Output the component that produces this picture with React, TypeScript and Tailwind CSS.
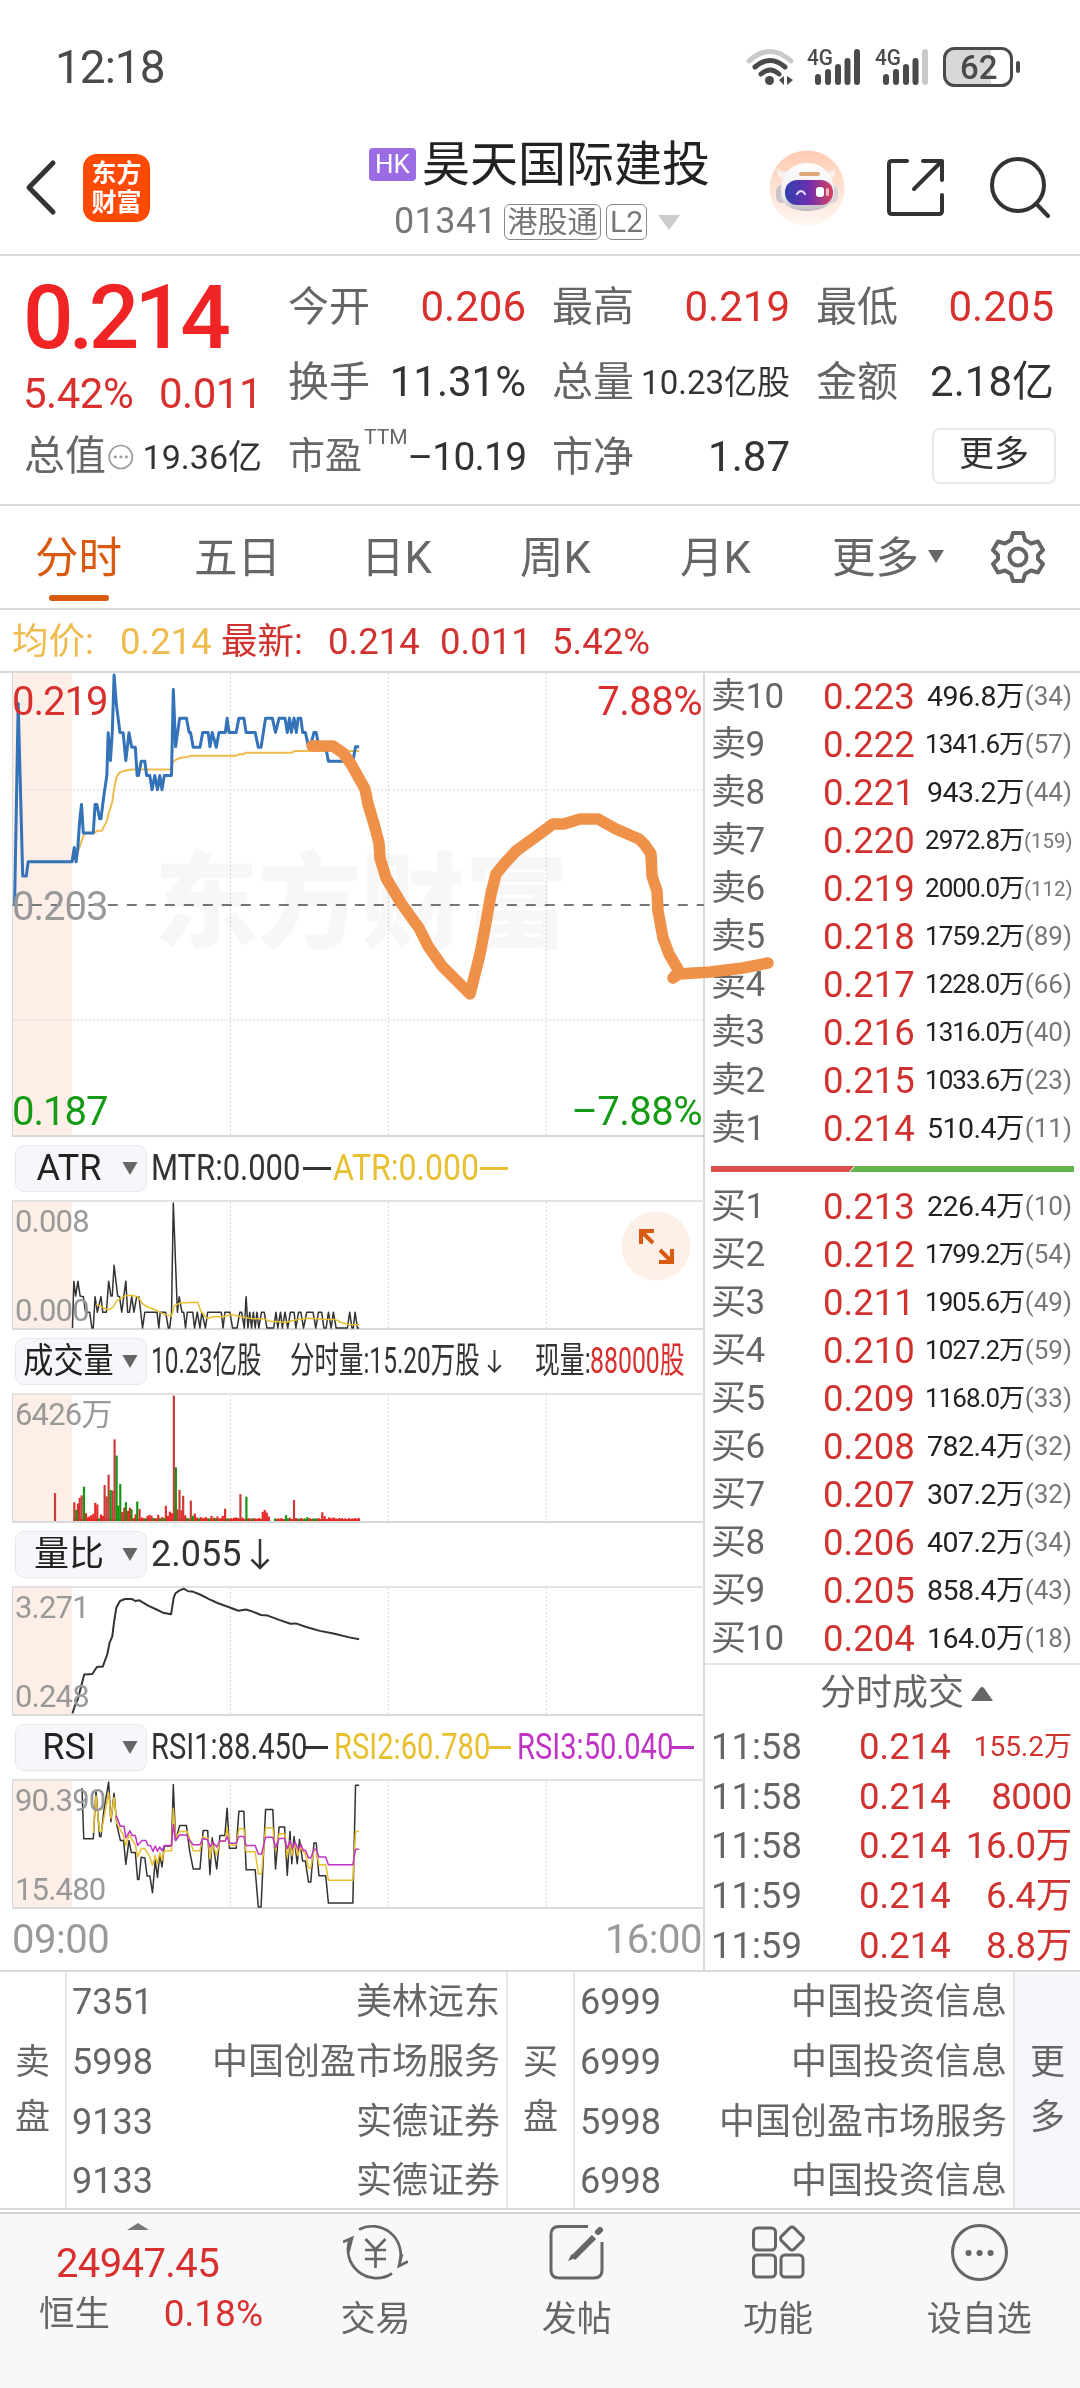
import type { ReactNode } from 'react';
import clsx from 'clsx';

const PRE_MARKET = 59;

const SELLS = [
  ['卖10', '0.223', '496.8万', '34'],
  ['卖9', '0.222', '1341.6万', '57'],
  ['卖8', '0.221', '943.2万', '44'],
  ['卖7', '0.220', '2972.8万', '159'],
  ['卖6', '0.219', '2000.0万', '112'],
  ['卖5', '0.218', '1759.2万', '89'],
  ['卖4', '0.217', '1228.0万', '66'],
  ['卖3', '0.216', '1316.0万', '40'],
  ['卖2', '0.215', '1033.6万', '23'],
  ['卖1', '0.214', '510.4万', '11'],
];

const BUYS = [
  ['买1', '0.213', '226.4万', '10'],
  ['买2', '0.212', '1799.2万', '54'],
  ['买3', '0.211', '1905.6万', '49'],
  ['买4', '0.210', '1027.2万', '59'],
  ['买5', '0.209', '1168.0万', '33'],
  ['买6', '0.208', '782.4万', '32'],
  ['买7', '0.207', '307.2万', '32'],
  ['买8', '0.206', '407.2万', '34'],
  ['买9', '0.205', '858.4万', '43'],
  ['买10', '0.204', '164.0万', '18'],
];

const TRADES = [
  ['11:58', '0.214', '155.2万'],
  ['11:58', '0.214', '8000'],
  ['11:58', '0.214', '16.0万'],
  ['11:59', '0.214', '6.4万'],
  ['11:59', '0.214', '8.8万'],
];

const SELL_BROKERS = [
  ['7351', '美林远东'],
  ['5998', '中国创盈市场服务'],
  ['9133', '实德证券'],
  ['9133', '实德证券'],
];

const BUY_BROKERS = [
  ['6999', '中国投资信息'],
  ['6999', '中国投资信息'],
  ['5998', '中国创盈市场服务'],
  ['6998', '中国投资信息'],
];

const PRICE_LINE =
  '30,738 38,128 48,648 56,648 60,605 157,605 162,562 166,605 170,560 174,480 178,432 182,518 204,518 208,432 212,432 218,475 221,475 228,400 234,345 237,216 242,300 246,216 250,42 255,130 263,215 270,216 276,300 283,216 289,260 297,260 301,345 304,345 310,302 318,302 322,345 329,345 334,388 340,345 346,388 351,345 356,388 361,345 377,345 381,86 386,258 395,172 410,172 416,215 419,215 425,260 440,260 446,215 458,215 462,258 467,215 476,260 482,215 496,215 500,172 504,215 520,215 526,172 537,172 542,215 562,215 569,260 575,260 585,172 600,172 607,215 615,172 628,172 633,215 638,172 642,215 648,172 653,215 657,172 663,172 667,215 673,215 680,258 684,258 692,215 697,215 703,260 718,260 724,302 778,302 784,258 792,258';

const AVG_LINE =
  '60,605 157,605 170,575 184,519 204,519 214,511 223,511 233,485 240,450 246,425 250,385 255,350 262,336 272,331 288,327 375,327 381,302 390,295 403,290 413,289 420,285 520,285 526,281 535,281 542,276 643,276 650,271 792,271';

const MTR_LINE =
  '158,597 161,452 165,498 170,452 175,498 182,500 187,548 196,548 201,597 204,597 208,500 213,548 221,500 225,548 233,548 238,452 243,498 246,498 250,403 258,498 262,500 267,548 276,452 280,548 284,548 289,500 294,548 300,500 305,500 313,597 318,548 345,548 349,597 352,548 364,548 370,597 373,597 377,550 381,210 390,548 394,500 400,548 404,548 408,597 412,548 424,548 428,597 434,548 440,597 444,548 452,597 457,548 487,548 491,597 495,548 506,548 512,597 522,597 528,548 532,548 538,597 542,500 546,597 550,548 554,597 558,548 562,597 566,548 570,597 576,548 582,548 588,597 603,597 608,548 612,597 618,548 622,597 628,548 634,597 640,548 648,548 652,597 658,548 663,548 669,597 676,548 690,548 696,597 702,548 709,548 714,597 719,597 724,548 730,597 735,548 741,597 766,597 771,548 776,597 779,597 783,548 788,597 792,597';

const ATR_LINE =
  '210,523 222,530 231,538 240,540 248,532 256,512 264,505 275,497 290,496 303,500 313,522 325,532 345,543 361,555 377,560 383,528 395,520 435,517 442,545 450,558 456,567 470,562 490,562 510,555 530,562 555,568 578,568 595,576 610,577 628,580 650,572 680,567 710,570 740,571 752,580 770,586 792,587';

const RATIO_LINE =
  '158,522 163,500 170,478 177,440 184,402 202,401 212,379 225,378 235,340 240,305 246,285 250,240 255,197 263,176 274,170 290,170 297,176 306,174 325,190 345,203 358,212 376,217 382,165 386,152 393,145 404,138 414,146 424,147 440,156 460,170 480,183 500,193 525,206 542,202 555,208 575,219 590,221 615,234 640,246 652,245 675,256 705,268 735,276 770,288 792,294';

const RSI1_LINE =
  '179,736 183,893 204,893 210,745 218,886 221,886 228,800 238,717 243,840 250,752 256,850 264,898 271,898 276,972 283,898 288,935 297,935 302,1019 305,1019 310,950 318,952 323,1008 329,1008 335,1060 341,960 346,1012 351,940 356,980 361,915 377,915 381,725 386,898 395,852 410,852 417,930 425,986 440,986 447,867 457,867 462,1004 467,890 477,986 484,883 495,883 500,798 505,922 520,922 526,808 537,808 542,989 562,989 569,1104 575,1104 585,802 601,802 607,986 615,856 627,856 633,1006 639,870 643,970 648,886 655,970 660,895 667,962 673,962 680,1027 685,1027 692,906 697,906 703,1007 718,1007 724,1092 778,1092 784,727 792,727';

const RSI2_LINE =
  '204,875 210,760 218,870 222,870 238,750 243,830 250,765 256,845 270,880 276,913 283,880 297,912 302,949 310,923 318,923 329,949 335,975 341,945 346,970 351,935 356,960 361,930 377,930 381,798 386,890 395,870 412,870 425,930 440,930 446,887 458,892 462,955 467,910 477,943 484,900 496,900 500,858 505,912 520,912 526,862 537,862 542,933 562,933 569,1001 576,1001 585,859 601,859 607,930 615,877 628,878 633,950 639,900 643,945 650,905 656,945 662,920 673,940 680,983 685,983 692,926 697,926 703,973 718,973 724,1021 778,1021 784,870 792,870';

const RSI3_LINE =
  '255,822 264,854 272,854 276,890 285,868 290,883 297,883 302,913 312,898 320,898 325,913 331,915 336,932 341,915 346,932 351,918 356,930 361,914 377,914 381,848 386,898 395,881 410,881 416,896 425,911 440,911 446,893 457,896 462,918 468,903 477,918 484,900 496,900 500,886 505,907 520,907 526,886 537,886 542,914 562,914 569,940 576,940 585,888 601,888 607,920 615,892 627,892 633,923 639,900 645,922 650,903 657,925 663,910 668,928 673,928 680,952 685,952 692,925 697,925 703,949 718,949 724,973 778,973 784,925 792,925';

// x : bar top, baseline at 606
const RED_BARS: [number, number][] = [
  [162, 520], [220, 548], [231, 552], [236, 534], [242, 527], [255, 582], [260, 595], [265, 592], [271, 588], [277, 584],
  [283, 550], [289, 555], [300, 586], [306, 590], [311, 495], [317, 530], [323, 463], [335, 512], [341, 354], [364, 578],
  [370, 565], [381, 575], [387, 565], [399, 597], [404, 585], [416, 569], [422, 595], [428, 597], [440, 590], [446, 587],
  [452, 590], [464, 597], [472, 587], [484, 594], [495, 559], [501, 590], [507, 577], [513, 582], [519, 219], [530, 570],
  [536, 510], [542, 573], [547, 528], [553, 588], [570, 543], [582, 583], [588, 595], [600, 594], [608, 596], [616, 594],
  [632, 590], [640, 596], [650, 592], [660, 597], [666, 590], [673, 568], [690, 597], [700, 596], [706, 595], [712, 597],
  [719, 523], [725, 595], [744, 597], [762, 598], [775, 597], [786, 578], [792, 572], [798, 580], [804, 592], [832, 598],
  [842, 597], [868, 596], [880, 541], [886, 597], [902, 597], [928, 597], [954, 597], [965, 579], [972, 591], [985, 595],
  [992, 597], [999, 595], [1006, 598], [1016, 597], [1024, 597], [1034, 598], [1046, 597], [1056, 598], [1064, 597], [1074, 596],
];

const GREEN_BARS: [number, number][] = [
  [226, 572], [249, 500], [294, 598], [329, 510], [347, 404], [352, 558], [358, 492], [375, 548], [392, 570], [409, 546],
  [434, 598], [458, 597], [478, 598], [490, 597], [525, 440], [560, 596], [576, 590], [594, 598], [624, 598], [645, 598],
  [680, 598], [737, 531], [755, 598], [823, 598], [856, 588], [862, 598], [894, 598], [912, 598], [920, 594], [938, 598],
  [946, 598],
];

const HAND_DRAWN =
  'M312 73 L333 73 L343 80 L351 91 L365 116 L368 131 L374 151 L379 170 L380 185 L386 205 L401 230 L419 255 L428 273 L442 293 L470 321 L475 301 L480 281 L485 255 L491 221 L496 201 L505 190 L516 178 L534 165 L553 151 L564 151 L580 146 L598 146 L616 156 L639 166 L645 172 L651 181 L652 203 L657 218 L658 238 L663 265 L669 281 L679 298 L673 305 L679 301 L710 299 L743 295 L768 290';

function Squeeze({ width, className, children }: { width: string; className: string; children: ReactNode }) {
  return (
    <span className={clsx('block shrink-0', width)}>
      <span className={clsx('inline-block origin-left whitespace-nowrap', className)}>{children}</span>
    </span>
  );
}

function StatusBar() {
  return (
    <div className="flex h-[136px] items-center justify-between pr-[58px] pl-[55px]">
      <span className="text-[46px] tracking-[-1px] text-[#4a4a4a]">12:18</span>
      <svg width="278" height="44" viewBox="744 46 278 44" fill="none" fontFamily="Roboto, sans-serif">
        <path d="M749 61 Q770 42 791 61" stroke="#c9c9c9" strokeWidth="5" strokeLinecap="round" />
        <path d="M755 67 Q770 54 785 67" stroke="#4a4a4a" strokeWidth="5" strokeLinecap="round" />
        <path d="M761 74 Q770 66 779 74" stroke="#4a4a4a" strokeWidth="5" strokeLinecap="round" />
        <circle cx="769.500" cy="80.500" r="4.500" fill="#4a4a4a" />
        <path d="M779 80 L784 76 V85 Z M787 76 L793 80 L787 85 Z" fill="#4a4a4a" />
        <text x="807" y="65" fontSize="22" fontWeight="500" textLength="26" lengthAdjust="spacingAndGlyphs" fill="#4a4a4a">
          4G
        </text>
        <g stroke="#4a4a4a" strokeWidth="6" strokeLinecap="round">
          <path d="M818 77 V82 M828 72 V82 M838 67 V82 M847.500 61 V82 M857 52 V82" />
          <path d="M886 77 V82 M896 72 V82 M906 67 V82 M915.500 61 V82" />
          <path d="M925 52 V82" stroke="#c9c9c9" />
        </g>
        <text x="875" y="65" fontSize="22" fontWeight="500" textLength="26" lengthAdjust="spacingAndGlyphs" fill="#4a4a4a">
          4G
        </text>
        <path d="M945 58 Q945 49 954 49 H991 V84 H954 Q945 84 945 75 Z" fill="#d8d8d8" />
        <rect x="944.500" y="48.500" width="67" height="37" rx="10" stroke="#4a4a4a" strokeWidth="3" />
        <path d="M1018 63 V71" stroke="#4a4a4a" strokeWidth="4" strokeLinecap="round" />
        <text x="960" y="78.500" fontSize="33" fontWeight="500" fill="#4a4a4a">
          62
        </text>
      </svg>
    </div>
  );
}

function Robot() {
  return (
    <svg width="76" height="76" viewBox="0 0 76 76">
      <defs>
        <linearGradient id="halo" x1="0" y1="0" x2="0" y2="1">
          <stop offset="0" stopColor="#ffcbb2" />
          <stop offset="1" stopColor="#fff7f3" />
        </linearGradient>
        <linearGradient id="visor" x1="0" y1="0" x2="1" y2="0">
          <stop offset="0" stopColor="#2f3fae" />
          <stop offset="0.5" stopColor="#6f2fb0" />
          <stop offset="1" stopColor="#d8435e" />
        </linearGradient>
        <linearGradient id="shell" x1="0" y1="0" x2="0" y2="1">
          <stop offset="0" stopColor="#ffffff" />
          <stop offset="0.7" stopColor="#eeebee" />
          <stop offset="1" stopColor="#bdb9c0" />
        </linearGradient>
      </defs>
      <circle cx="38" cy="38" r="37.500" fill="url(#halo)" />
      <path d="M8 18 Q7 28 16 30 L22 20 Q12 24 8 18 Z M66 18 Q68 28 59 30 L52 20 Q63 24 66 18 Z" fill="#f7efed" />
      <rect x="7" y="35" width="12" height="18" rx="6" fill="#c9c5ca" />
      <rect x="57" y="35" width="12" height="18" rx="6" fill="#d8d3d6" />
      <path d="M38 13 C54 13 65 25 65 42 C65 55 53 61 38 61 C23 61 12 55 12 42 C12 25 22 13 38 13 Z" fill="url(#shell)" />
      <rect x="30" y="22" width="21" height="4" rx="2" fill="#dfa878" />
      <rect x="16" y="30" width="48" height="25" rx="12" fill="url(#visor)" />
      <path d="M28 44 Q32 38 36 44" fill="none" stroke="#e4dcff" strokeWidth="2.200" strokeLinecap="round" />
      <rect x="47" y="37" width="8" height="10" rx="3" fill="#fff" />
      <rect x="57" y="38" width="3" height="8" rx="1.500" fill="#f3b6c1" />
    </svg>
  );
}

function Header() {
  return (
    <header className="flex h-[120px] items-center border-b-2 border-[#d9d9d9] pb-[14px]">
      <svg className="ml-[24px]" width="34" height="58" viewBox="0 0 34 58" fill="none">
        <path d="M29 4 L5 28.500 L29 53" stroke="#333" strokeWidth="5" strokeLinecap="round" strokeLinejoin="round" />
      </svg>
      <div className="ml-[25px] grid h-[68px] w-[67px] place-content-center rounded-[14px] bg-[#ff4a05] text-center text-[25px] leading-[29px] font-bold text-white">
        <div>东方</div>
        <div>财富</div>
      </div>
      <div className="mt-[5px] ml-[219px] w-[342px]">
        <div className="flex h-[63px] items-center">
          <span className="mr-[6px] h-[33px] w-[47px] rounded-[4px] bg-[#9b6ce3] text-center text-[26px] leading-[33px] text-white">
            HK
          </span>
          <span className="text-[48px] leading-[60px] whitespace-nowrap text-[#222]">昊天国际建投</span>
        </div>
        <div className="flex h-[52px] items-center pl-[25px] text-[#777]">
          <span className="w-[110px] text-[36px] tracking-[0.400px]">01341</span>
          <span className="h-[36px] w-[97px] rounded-[6px] border-[1.500px] border-[#888] text-center text-[30px] leading-[33px]">港股通</span>
          <span className="ml-[5px] h-[36px] w-[41px] rounded-[6px] border-[1.500px] border-[#888] text-center text-[30px] leading-[33px]">L2</span>
          <svg className="ml-[11px]" width="22" height="15" viewBox="0 0 22 15">
            <path d="M0 0 H22 L11 15 Z" fill="#ccc" />
          </svg>
        </div>
      </div>
      <div className="ml-[58px] flex items-center">
        <Robot />
        <svg className="ml-[40px]" width="62" height="62" viewBox="0 0 62 62" fill="none" stroke="#333" strokeWidth="4" strokeLinecap="round" strokeLinejoin="round">
          <path d="M22 4 H7 Q4 4 4 7 V54 Q4 57 7 57 H54 Q57 57 57 54 V38" />
          <path d="M38 4 H57 V23 M57 4 L29 32" />
        </svg>
        <svg className="ml-[41px]" width="64" height="64" viewBox="0 0 64 64" fill="none" stroke="#333" strokeWidth="4" strokeLinecap="round">
          <circle cx="30" cy="29" r="26" />
          <path d="M48 47.500 L60 60" />
        </svg>
      </div>
    </header>
  );
}

function Stat({ label, value, valueClass }: { label: ReactNode; value: string; valueClass: string }) {
  return (
    <div className="flex h-[75px] items-center justify-between whitespace-nowrap">
      <span className="-ml-[2px] text-[41px] text-[#666]">{label}</span>
      <span className={valueClass}>{value}</span>
    </div>
  );
}

function Quote() {
  return (
    <section className="grid h-[250px] grid-cols-4 gap-x-[28px] border-b-2 border-[#d9d9d9] px-[26px]">
      <div className="pt-[24px] whitespace-nowrap">
        <div className="-ml-[3px] h-[76px] text-[89px] leading-[76px] font-medium tracking-[-4.800px] text-[#f02424]">0.214</div>
        <div className="-ml-[3px] flex h-[77px] items-center justify-between text-[42px] tracking-[-0.500px] text-[#d8302e]">
          <span>5.42%</span>
          <span>0.011</span>
        </div>
        <div className="-ml-[2px] flex h-[48px] items-center">
          <span className="text-[41px] text-[#666]">总值</span>
          <svg className="ml-[2px]" width="30" height="30" viewBox="0 0 30 30" fill="none" stroke="#999">
            <circle cx="15" cy="15" r="13.500" strokeWidth="2" />
            <path d="M8.500 15 H8.600 M15 15 H15.100 M21.500 15 H21.600" strokeWidth="3.500" strokeLinecap="round" />
          </svg>
          <span className="ml-[9px] text-[34px] text-[#333]">19.36亿</span>
        </div>
      </div>
      <div className="pt-[14px]">
        <Stat label="今开" value="0.206" valueClass="text-[42px] text-[#d8302e]" />
        <Stat label="换手" value="11.31%" valueClass="text-[42px] text-[#333]" />
        <Stat
          label={
            <span className="flex text-[37px]">
              市盈<span className="-mt-[12px] ml-[2px] text-[21px] leading-[28px]">TTM</span>
            </span>
          }
          value="–10.19"
          valueClass="text-[39px] tracking-[-0.800px] text-[#333]"
        />
      </div>
      <div className="pt-[14px]">
        <Stat label="最高" value="0.219" valueClass="text-[42px] text-[#d8302e]" />
        <Stat label="总量" value="10.23亿股" valueClass="text-[33px] text-[#333]" />
        <Stat label="市净" value="1.87" valueClass="text-[42px] text-[#333]" />
      </div>
      <div className="pt-[14px]">
        <Stat label="最低" value="0.205" valueClass="text-[42px] text-[#d8302e]" />
        <Stat label="金额" value="2.18亿" valueClass="text-[42px] text-[#333]" />
        <div className="flex h-[75px] items-center justify-end">
          <span className="-mt-[3px] -mr-[2px] h-[56px] w-[124px] rounded-[8px] border-2 border-[#e8e8e8] text-center text-[35px] leading-[50px] text-[#333]">
            更多
          </span>
        </div>
      </div>
    </section>
  );
}

function Tabs() {
  return (
    <nav className="flex h-[104px] border-b-2 border-[#d9d9d9] text-[43.500px] leading-[106px] whitespace-nowrap text-[#666]">
      <div className="ml-[35px] w-[159px] text-[#d9590f]">
        <div className="h-[89px]">分时</div>
        <div className="ml-[14px] h-[6px] w-[60px] rounded-full bg-[#d9590f]" />
      </div>
      <div className="w-[167px]">五日</div>
      <div className="w-[159px]">日K</div>
      <div className="w-[160px]">周K</div>
      <div className="w-[152px]">月K</div>
      <div className="w-[96px]">更多</div>
      <svg className="mt-[44px]" width="16" height="13" viewBox="0 0 16 13">
        <path d="M0 0 H16 L8 13 Z" fill="#666" />
      </svg>
      <svg className="mt-[24px] ml-[47px]" width="54" height="54" viewBox="0 0 54 54" fill="none" stroke="#666" strokeWidth="4" strokeLinejoin="round">
        <path d="M22 3 H32 L34 10 L40 13.500 L47 11.500 L52 20 L47 25 V29 L52 34 L47 42.500 L40 40.500 L34 44 L32 51 H22 L20 44 L14 40.500 L7 42.500 L2 34 L7 29 V25 L2 20 L7 11.500 L14 13.500 L20 10 Z" />
        <circle cx="27" cy="27" r="8.500" />
      </svg>
    </nav>
  );
}

function Plot({ viewBox, className, children }: { viewBox: string; className: string; children: ReactNode }) {
  return (
    <div className={clsx('relative ml-[11.500px] w-[692px]', className)}>
      <svg className="absolute inset-0 h-full w-full" fill="none">
        <rect x="0" y="0" width={PRE_MARKET} height="100%" fill="#fdeee7" />
        <g stroke="#d9d9d9" strokeWidth="1" strokeDasharray="2 2">
          <line x1="217.500" y1="0" x2="217.500" y2="100%" />
          <line x1="375.500" y1="0" x2="375.500" y2="100%" />
          <line x1="533.500" y1="0" x2="533.500" y2="100%" />
        </g>
      </svg>
      <svg className="absolute inset-0 h-full w-full overflow-visible" viewBox={viewBox} preserveAspectRatio="none" fill="none">
        {children}
      </svg>
    </div>
  );
}

function Line({ points, color, width = 1.5 }: { points: string; color: string; width?: number }) {
  return <polyline points={points} stroke={color} strokeWidth={width} strokeLinejoin="round" vectorEffect="non-scaling-stroke" />;
}

function IndicatorHead({ name, nameClass, children }: { name: string; nameClass?: string; children: ReactNode }) {
  return (
    <div className="flex h-[63px] items-center pl-[15px] text-[36px] text-[#333]">
      <div className="flex h-[47px] w-[132px] shrink-0 items-center rounded-[9px] border-[1.500px] border-[#e6e8eb] bg-[#f6f7fa]">
        <div className="flex w-[106px] justify-center whitespace-nowrap text-[#222]">
          <span className={nameClass}>{name}</span>
        </div>
        <svg width="16" height="13" viewBox="0 0 14 12">
          <path d="M0 0 H14 L7 12 Z" fill="#666" />
        </svg>
      </div>
      <div className="ml-[4px] flex items-center whitespace-nowrap">{children}</div>
    </div>
  );
}

function Legend({ text, className, squeeze, dash }: { text: string; className: string; squeeze: string; dash: string }) {
  return (
    <div className={clsx('flex w-[183px] items-center', className)}>
      <Squeeze width="w-[152px]" className={squeeze}>
        {text}
      </Squeeze>
      <span className={clsx('h-[2.500px] bg-current', dash)} />
    </div>
  );
}

function DownArrow({ className }: { className?: string }) {
  return (
    <svg className={className} width="20" height="31" viewBox="0 0 20 31" fill="none" stroke="#333" strokeWidth="2.500">
      <path d="M10 0 V29 M1.500 20.500 L10 29 L18.500 20.500" />
    </svg>
  );
}

function MainChart() {
  return (
    <div className="relative">
      <div className="absolute top-[167px] left-[154px] text-[104px] leading-[130px] font-black tracking-[-0.500px] text-[#f7f7f7]">东方财富</div>
      <Plot viewBox="26.5 36 1528 1392" className="h-[464px] border-b-2 border-l border-[#d9d9d9] mix-blend-multiply">
        <g stroke="#d4d4d4" strokeDasharray="2 2">
          <line x1="26" y1="388" x2="1554" y2="388" vectorEffect="non-scaling-stroke" />
          <line x1="26" y1="1081" x2="1554" y2="1081" vectorEffect="non-scaling-stroke" />
        </g>
        <line x1="26" y1="735" x2="1554" y2="735" stroke="#777" strokeWidth="2" strokeDasharray="10 9" vectorEffect="non-scaling-stroke" />
        <Line points={AVG_LINE} color="#efbb4d" width={2} />
        <Line points={PRICE_LINE} color="#3573b9" width={3} />
      </Plot>
      <div className="absolute top-[8px] left-[12px] text-[40px] leading-[42px] tracking-[-1px] text-[#d8302e]">0.219</div>
      <div className="absolute top-[8px] right-[1px] text-[40px] leading-[42px] tracking-[-0.500px] text-[#d8302e]">7.88%</div>
      <div className="absolute top-[213px] left-[12px] text-[40px] leading-[42px] tracking-[-1px] text-[#999]">0.203</div>
      <div className="absolute top-[418px] left-[12px] text-[40px] leading-[42px] tracking-[-1px] text-[#159a15]">0.187</div>
      <div className="absolute top-[418px] right-[1px] text-[40px] leading-[42px] tracking-[-0.500px] text-[#159a15]">–7.88%</div>
    </div>
  );
}

function Indicator({ top, bottom, viewBox, children }: { top: string; bottom?: string; viewBox: string; children: ReactNode }) {
  return (
    <div className="relative text-[31px] leading-[34px] tracking-[-0.800px] text-[#999]">
      <Plot viewBox={viewBox} className="h-[130px] border-t-2 border-b-2 border-l border-t-[#e2e2e2] border-b-[#d9d9d9] border-l-[#d9d9d9]">
        {children}
      </Plot>
      <div className="absolute top-[5px] left-[15px]">{top}</div>
      {bottom && <div className="absolute top-[94px] left-[15px]">{bottom}</div>}
    </div>
  );
}

function Charts() {
  return (
    <div className="w-[705px] shrink-0 border-r-2 border-[#d9d9d9]">
      <MainChart />

      <IndicatorHead name="ATR">
        <Legend text="MTR:0.000" className="" squeeze="scale-x-[0.86]" dash="w-[28px]" />
        <Legend text="ATR:0.000" className="text-[#e8c02f]" squeeze="scale-x-[0.89] -ml-px" dash="-ml-[6px] w-[28px]" />
      </IndicatorHead>
      <div className="relative">
        <Indicator top="0.008" bottom="0.000" viewBox="26.5 207 1528 390">
          <Line points={MTR_LINE} color="#333" />
          <Line points={ATR_LINE} color="#e8c02f" />
        </Indicator>
        <svg className="absolute top-[11px] left-[621px]" width="70" height="70" viewBox="0 0 70 70" fill="none" stroke="#d9590f" strokeWidth="4">
          <circle cx="35" cy="35" r="34.500" fill="#feefe8" stroke="none" />
          <path d="M20 33 V20 H33 M20 20 L32 32 M38 51 H51 V38 M51 51 L39 39" />
        </svg>
      </div>

      <IndicatorHead name="成交量" nameClass="inline-block text-[35px] scale-x-[0.86]">
        <Squeeze width="w-[139px]" className="scale-x-[0.68]">
          10.23亿股
        </Squeeze>
        <Squeeze width="w-[194px]" className="scale-x-[0.68]">
          分时量:15.20万股
        </Squeeze>
        <DownArrow className="ml-[3px] w-[15px]" />
        <span className="ml-[33px]">
          <Squeeze width="w-[55px]" className="scale-x-[0.69]">
            现量:
          </Squeeze>
        </span>
        <Squeeze width="w-[94px]" className="scale-x-[0.69] text-[#d8302e]">
          88000股
        </Squeeze>
      </IndicatorHead>
      <Indicator top="6426万" viewBox="36 217 2076 389">
        <rect x="217" y="599" width="590" height="7" fill="#d9302c" />
        <rect x="820" y="600" width="259" height="6" fill="#d9302c" />
        {RED_BARS.map(([x, y]) => (
          <rect key={x} x={x - 3} y={y} width="6.500" height={606 - y} fill={y < 545 ? '#cb3a38' : '#e62828'} />
        ))}
        {GREEN_BARS.map(([x, y]) => (
          <rect key={x} x={x - 3} y={y} width="6.500" height={606 - y} fill="#119611" />
        ))}
      </Indicator>

      <IndicatorHead name="量比" nameClass="text-[35px]">
        <span className="w-[99px] text-[36px]">2.055</span>
        <DownArrow />
      </IndicatorHead>
      <Indicator top="3.271" bottom="0.248" viewBox="26.5 136 1528 388">
        <Line points={RATIO_LINE} color="#333" width={2} />
      </Indicator>

      <IndicatorHead name="RSI">
        <Legend text="RSI1:88.450" className="" squeeze="scale-x-[0.81]" dash="w-[25px]" />
        <Legend text="RSI2:60.780" className="text-[#e8c02f]" squeeze="scale-x-[0.81]" dash="w-[25px]" />
        <Legend text="RSI3:50.040" className="text-[#c034c4]" squeeze="scale-x-[0.81]" dash="w-[25px]" />
      </IndicatorHead>
      <Indicator top="90.390" bottom="15.480" viewBox="26.5 714 1528 390">
        <Line points={RSI1_LINE} color="#333" />
        <Line points={RSI2_LINE} color="#e8c02f" />
        <Line points={RSI3_LINE} color="#c034c4" />
      </Indicator>

      <div className="flex h-[61px] items-center justify-between pr-[1px] pl-[12px] text-[40px] tracking-[-0.500px] text-[#999]">
        <span>09:00</span>
        <span>16:00</span>
      </div>
    </div>
  );
}

function DepthRow({ row }: { row: string[] }) {
  const [label, price, volume, count] = row;
  return (
    <div className="flex h-[48px] items-center whitespace-nowrap">
      <span className="w-[112px] text-[35px] tracking-[-0.600px] text-[#666]">{label}</span>
      <span className="w-[88px] text-[36.500px] text-[#d0322f]">{price}</span>
      <span className={clsx('flex-1 text-right text-[#222]', volume.length > 6 ? 'text-[26px] tracking-[-1px]' : 'text-[28.500px] tracking-[-0.500px]')}>
        {volume}
      </span>
      <span className={clsx('w-[48px] text-right text-[#777]', count.length > 2 ? 'text-[20.500px]' : 'text-[26px]')}>
        ({count})
      </span>
    </div>
  );
}

function OrderBook() {
  return (
    <div className="flex-1">
      <div className="pr-[8px] pl-[6px]">
        {SELLS.map((row) => (
          <DepthRow key={row[0]} row={row} />
        ))}
      </div>
      <svg className="mt-[13px] mb-[11px] ml-[6px]" width="363" height="6" viewBox="0 0 363 6">
        <path d="M0 0 H143 L138 6 H0 Z" fill="#d9504d" />
        <path d="M144 0 H363 V6 H139 Z" fill="#62b54e" />
      </svg>
      <div className="pr-[8px] pl-[6px]">
        {BUYS.map((row) => (
          <DepthRow key={row[0]} row={row} />
        ))}
      </div>
      <div className="flex h-[59px] items-center justify-center border-t-2 border-[#e4e4e4] pl-[28px] text-[36px] text-[#666]">
        分时成交
        <svg className="ml-[7px]" width="22" height="14" viewBox="0 0 22 14">
          <path d="M0 14 L9 1 Q11 -1 13 1 L22 14 Z" fill="#666" />
        </svg>
      </div>
      {TRADES.map(([time, price, volume], i) => (
        <div key={i} className="flex h-[49.700px] items-center pr-[8px] pl-[6px] text-[36.500px] text-[#d0322f]">
          <span className="w-[148px] text-[#666]">{time}</span>
          <span className="w-[90px]">{price}</span>
          <span className={clsx('flex-1 text-right', volume.length > 5 ? 'text-[28px]' : 'tracking-[-0.300px]')}>{volume}</span>
        </div>
      ))}
    </div>
  );
}

function BrokerList({ title, rows, width }: { title: string; rows: string[][]; width: string }) {
  return (
    <>
      <div className="flex w-[65px] flex-col items-center justify-center text-[35px] leading-[55px]">
        <span>{title[0]}</span>
        <span>{title[1]}</span>
      </div>
      <div className={clsx('border-x-2 border-[#e6e6e6] pt-px pr-[6px] pl-[5px]', width)}>
        {rows.map(([code, name], i) => (
          <div key={i} className="flex h-[59.700px] items-center justify-between text-[36px] whitespace-nowrap">
            <span>{code}</span>
            <span>{name}</span>
          </div>
        ))}
      </div>
    </>
  );
}

function BottomBar() {
  return (
    <footer className="flex h-[176px] border-t-2 border-[#d2d2d2] bg-[#f7f8fa] text-[#666]">
      <div className="flex w-[275px] flex-col items-center">
        <svg className="mt-[9px]" width="22" height="7" viewBox="0 0 22 7">
          <path d="M0 7 L11 0 L22 7 Z" fill="#777" />
        </svg>
        <div className="mt-[10px] text-[40px] leading-[48px] tracking-[-0.600px] text-[#d8302e]">24947.45</div>
        <div className="mt-[3px] ml-[27px] flex h-[46px] w-[224px] items-center justify-between">
          <span className="text-[35.500px]">恒生</span>
          <span className="text-[37px]  text-[#d8302e]">0.18%</span>
        </div>
      </div>
      <NavItem label="交易">
        <g strokeWidth="2.700">
          <path d="M16 7.500 A28.500 28.500 0 0 1 56.500 41 M49 51.500 A28.500 28.500 0 0 1 7 17" />
          <path d="M0 20 L9 16 L5.500 30 M65 39.500 L56 44 L59 32" />
          <path d="M22.500 17 L32.500 27.500 L42.500 17 M32.500 27.500 V46 M22 28 H43 M22 37 H43" />
        </g>
      </NavItem>
      <NavItem label="发帖">
        <path d="M44 4.500 H15 Q7 4.500 7 12.500 V48 Q7 56 15 56 H50 Q58 56 58 48 V20" strokeWidth="3" />
        <path d="M50 15 L29 36" strokeWidth="6" />
        <path d="M24 39 L27.500 32 L31.500 36 Z" fill="#666" stroke="none" />
        <path d="M54 10 L56 8" strokeWidth="6" strokeLinecap="round" />
      </NavItem>
      <NavItem label="功能">
        <g strokeWidth="3">
          <rect x="7.500" y="6" width="22" height="22" rx="4" />
          <rect x="7.500" y="33" width="22" height="22" rx="4" />
          <rect x="35" y="33" width="22" height="22" rx="4" />
          <rect x="37" y="7.500" width="18" height="18" rx="3" transform="rotate(45 46 16.500)" />
        </g>
      </NavItem>
      <NavItem label="设自选">
        <circle cx="32.500" cy="30.500" r="27" strokeWidth="3" />
        <path d="M21.500 31 H21.600 M32.500 31 H32.600 M43.500 31 H43.600" strokeWidth="6" strokeLinecap="round" />
      </NavItem>
    </footer>
  );
}

function NavItem({ label, children }: { label: string; children: ReactNode }) {
  return (
    <div className="flex flex-1 flex-col items-center pt-[8px]">
      <svg width="65" height="61" viewBox="0 0 65 61" fill="none" stroke="#666">
        {children}
      </svg>
      <span className="mt-[12px] text-[35px] leading-[50px]">{label}</span>
    </div>
  );
}

export default function App() {
  return (
    <div className="h-[2388px] w-[1080px] overflow-hidden bg-white font-[Roboto,'Noto_Sans_CJK_SC',sans-serif] leading-[1.2]">
      <StatusBar />
      <Header />
      <Quote />
      <Tabs />
      <div className="flex h-[63px] items-center border-b-2 border-[#d9d9d9] pt-[2px] pl-[12px] text-[36.500px] whitespace-nowrap text-[#d0322f]">
        <div className="w-[108px] text-[#efbb4d]">均价:</div>
        <div className="w-[101px] text-[#efbb4d]">0.214</div>
        <div className="w-[107px]">最新:</div>
        <div className="w-[112px]">0.214</div>
        <div className="w-[112px]">0.011</div>
        <div>5.42%</div>
      </div>
      <main className="relative flex h-[1297px]">
        <Charts />
        <OrderBook />
        <svg className="pointer-events-none absolute inset-0 h-[464px] w-full" fill="none">
          <path d={HAND_DRAWN} stroke="#f0914a" strokeWidth="11.500" strokeLinecap="round" strokeLinejoin="round" />
        </svg>
      </main>
      <section className="flex h-[240px] border-y-2 border-[#d9d9d9] text-[#666]">
        <BrokerList title="卖盘" rows={SELL_BROKERS} width="w-[443px]" />
        <BrokerList title="买盘" rows={BUY_BROKERS} width="w-[442px]" />
        <div className="flex flex-1 flex-col items-center justify-center bg-[#f6f7fa] text-[35px] leading-[55px]">
          <span>更</span>
          <span>多</span>
        </div>
      </section>
      <div className="h-[2px]" />
      <BottomBar />
    </div>
  );
}
